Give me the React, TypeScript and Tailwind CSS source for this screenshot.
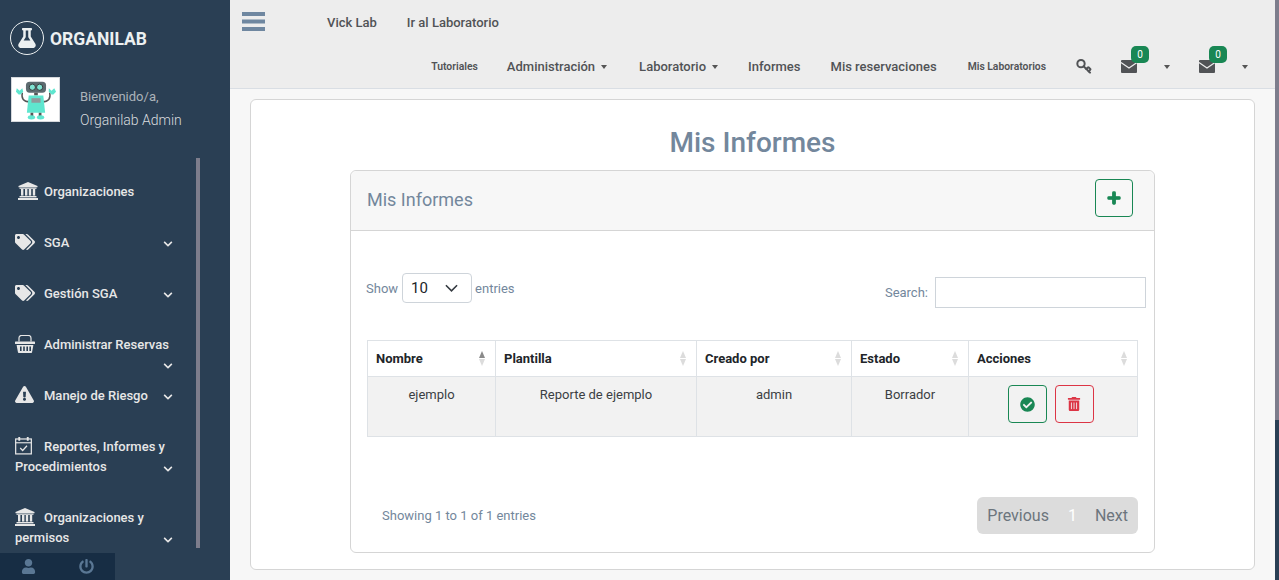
import React from 'react'
import { Key } from 'lucide-react'
import {
  FaCheckCircle,
  FaChevronDown,
  FaExclamationTriangle,
  FaFlask,
  FaPlus,
  FaPowerOff,
  FaTags,
  FaTrashAlt,
  FaUser,
} from 'react-icons/fa'

function Robot() {
  return (
    <svg viewBox="0 0 50 46" className="w-[46px] h-[42px]">
      <path d="M10 15 Q8 25 18 25 M40 15 Q42 25 32 25" stroke="#555" strokeWidth="1.6" fill="none" />
      <path d="M4 10l3 3 3-3 1 4-3 3H6l-3-3z M39 10l3 3 3-3 2 4-3 3h-2l-3-3z" fill="#5fe6cf" />
      <rect x="14" y="3" width="22" height="12" rx="4" fill="#5d6b70" />
      <circle cx="21" cy="9" r="3.4" fill="#7fe3d2" stroke="#333" />
      <circle cx="29" cy="9" r="3.4" fill="#7fe3d2" stroke="#333" />
      <rect x="23" y="15" width="4" height="3" fill="#555" />
      <path d="M17 18h16l2 19H15z" fill="#5fe6cf" />
      <rect x="20" y="21" width="10" height="5" fill="#8f9a9c" />
      <rect x="19" y="37" width="3" height="4" fill="#555" />
      <rect x="28" y="37" width="3" height="4" fill="#555" />
      <ellipse cx="20" cy="42" rx="4" ry="2.4" fill="#5fe6cf" />
      <ellipse cx="30" cy="42" rx="4" ry="2.4" fill="#5fe6cf" />
    </svg>
  )
}

function BankIcon() {
  return (
    <svg viewBox="0 0 20 18" className="w-[20px] h-[18px]" fill="currentColor">
      <path d="M10 0l9.5 4v1.2H.5V4z" />
      <rect x="1.5" y="5.6" width="17" height="1.2" />
      <rect x="3" y="7" width="2.4" height="6.6" />
      <rect x="7" y="7" width="2.4" height="6.6" />
      <rect x="10.8" y="7" width="2.4" height="6.6" />
      <rect x="14.8" y="7" width="2.4" height="6.6" />
      <rect x="1.5" y="14" width="17" height="1.4" />
      <rect x="0" y="16" width="20" height="2" />
    </svg>
  )
}

function BasketIcon() {
  return (
    <svg viewBox="0 0 20 18" className="w-[20px] h-[18px]" fill="currentColor">
      <path d="M4 6.5V3a2.5 2.5 0 0 1 2.5-2.5h7A2.5 2.5 0 0 1 16 3v3.5" fill="none" stroke="currentColor" strokeWidth="1.2" />
      <rect x="0" y="6.5" width="20" height="2.6" rx="0.6" />
      <path fillRule="evenodd" d="M1.6 10h16.8l-1.3 7a1 1 0 0 1-1 1H3.9a1 1 0 0 1-1-1zM5 11.5v4.5h1.6v-4.5zM8.2 11.5v4.5h1.6v-4.5zM11.4 11.5v4.5H13v-4.5zM14.4 11.5v4.5H16v-4.5z" />
    </svg>
  )
}

function CalendarIcon() {
  return (
    <svg viewBox="0 0 18 19" className="w-[17px] h-[19px]" fill="none" stroke="currentColor">
      <rect x="0.7" y="2.6" width="16.6" height="15.8" strokeWidth="1.3" />
      <path d="M0.7 6.6h16.6" strokeWidth="1.2" />
      <path d="M4.5 0.4v4M13.5 0.4v4" strokeWidth="2" />
      <path d="M5.5 12.2l2.6 2.6 4.6-5" strokeWidth="1.3" />
    </svg>
  )
}

function MailIcon() {
  return (
    <svg viewBox="0 0 16 13" className="block w-[16px] h-[13px]">
      <rect width="16" height="13" rx="1" fill="#515356" />
      <path d="M0 2.6l8 5.4 8-5.4" fill="none" stroke="#ededed" strokeWidth="1.2" />
    </svg>
  )
}

function ThinChevron() {
  return (
    <svg viewBox="0 0 14 8" className="w-[13px] h-[8px]" fill="none" stroke="#343a40" strokeWidth="1.7">
      <path d="M1 1l6 6 6-6" />
    </svg>
  )
}

function SortArrows({ active }: { active?: boolean }) {
  return (
    <span className="flex flex-col gap-[1px]">
      <span className={`w-0 h-0 border-x-[3.5px] border-x-transparent border-b-[7px] ${active ? 'border-b-[#8a8a8a]' : 'border-b-[#dcdcdc]'}`} />
      <span className="w-0 h-0 border-x-[3.5px] border-x-transparent border-t-[7px] border-t-[#dcdcdc]" />
    </span>
  )
}

function Caret() {
  return <span className="block w-0 h-0 border-x-[3.5px] border-x-transparent border-t-[4px] border-t-[#555]" />
}

type MenuItem = { icon: React.ReactNode; label: string; second?: string; chevron?: 'inline' | 'below'; height: string }

const menu: MenuItem[] = [
  { icon: <span className="ml-[3px]"><BankIcon /></span>, label: 'Organizaciones', height: 'h-[51px]' },
  { icon: <FaTags className="text-[20px]" />, label: 'SGA', chevron: 'inline', height: 'h-[51px]' },
  { icon: <FaTags className="text-[20px]" />, label: 'Gestión SGA', chevron: 'inline', height: 'h-[51px]' },
  { icon: <BasketIcon />, label: 'Administrar Reservas', chevron: 'below', height: 'h-[51px]' },
  { icon: <FaExclamationTriangle className="text-[19px]" />, label: 'Manejo de Riesgo', chevron: 'inline', height: 'h-[51px]' },
  { icon: <CalendarIcon />, label: 'Reportes, Informes y', second: 'Procedimientos', chevron: 'inline', height: 'h-[71px]' },
  { icon: <BankIcon />, label: 'Organizaciones y', second: 'permisos', chevron: 'inline', height: 'h-[60px]' },
]

function Sidebar() {
  return (
    <aside className="relative w-[230px] shrink-0 h-[580px] bg-[#2a3f54] overflow-hidden">
      <div className="flex items-center h-[75px] pl-[10px]">
        <span className="w-[34px] h-[34px] rounded-full border-[1.5px] border-[#ecf0f1] flex items-center justify-center text-[#ecf0f1] text-[20px]">
          <FaFlask />
        </span>
        <span className="ml-[6px] pt-[3px] text-[#ecf0f1] text-[17.5px] font-bold">ORGANILAB</span>
      </div>
      <div className="flex h-[83px] mt-[2px]">
        <div className="ml-[11px] w-[49px] h-[45px] bg-white border border-[#d5d8dc] flex items-center justify-center">
          <Robot />
        </div>
        <div className="ml-[20px] pt-[12px]">
          <p className="text-[13px] leading-[16px] text-[#acb3ba]">Bienvenido/a,</p>
          <p className="mt-[6px] text-[14px] leading-[18px] font-light text-[#d8dbdf]">Organilab Admin</p>
        </div>
      </div>
      <nav className="pt-[19px] pl-[15px] w-[181px] text-[#e7e7e7] text-[13px] font-medium">
        {menu.map((item) => (
          <div key={item.label} className={`${item.height} relative`}>
            <div className="flex items-center h-[26px] leading-[20px] whitespace-nowrap">
              <span className="w-[29px] flex items-center mb-[3px]">{item.icon}</span>
              <span>{item.label}</span>
            </div>
            {item.second && <div className="leading-[20px] -mt-[3px]">{item.second}</div>}
            {item.chevron && (
              <FaChevronDown
                className={`absolute left-[148px] text-[10px] ${item.chevron === 'below' ? 'top-[29px]' : item.second ? 'top-[30px]' : 'top-[9px]'}`}
              />
            )}
          </div>
        ))}
      </nav>
      {/* sidebar scroll thumb */}
      <div className="absolute left-[196px] top-[158px] w-[4px] h-[390px] bg-[#7d7d8c]" />
      <div className="absolute left-0 bottom-0 w-[115px] h-[27px] bg-[#172d44] flex items-center text-[#5a7794]">
        <span className="w-[57px] flex justify-center text-[15px]"><FaUser /></span>
        <span className="w-[58px] flex justify-center text-[15px]"><FaPowerOff /></span>
      </div>
    </aside>
  )
}

function Topbar() {
  return (
    <header className="h-[89px] bg-[#ededed] border-b border-[#d9dee4] text-[#515356] font-medium">
      <div className="flex items-center h-[46px]">
        <svg viewBox="0 0 23 19" className="ml-[12px] w-[23px] h-[19px] self-start mt-[12px]" fill="#6f87a0">
          <rect width="23" height="4" />
          <rect y="7.5" width="23" height="4" />
          <rect y="15" width="23" height="4" />
        </svg>
        <span className="ml-[62px] text-[13px]">Vick Lab</span>
        <span className="ml-[30px] text-[13px]">Ir al Laboratorio</span>
      </div>
      <nav className="flex items-center justify-end h-[42px] pr-[31px]">
        <span className="text-[10.4px] font-semibold">Tutoriales</span>
        <span className="ml-[29px] text-[13px]">Administración</span>
        <span className="ml-[6px]"><Caret /></span>
        <span className="ml-[32px] text-[13px]">Laboratorio</span>
        <span className="ml-[6px]"><Caret /></span>
        <span className="ml-[30px] text-[13px]">Informes</span>
        <span className="ml-[30px] text-[13px]">Mis reservaciones</span>
        <span className="ml-[31px] text-[10.35px] font-semibold">Mis Laboratorios</span>
        <Key className="ml-[30px] w-[16px] h-[16px] -mt-[2px] -scale-y-100" strokeWidth={3} />
        {[0, 1].map((i) => (
          <React.Fragment key={i}>
            <span className="relative -mt-[2px] ml-[29px]">
              <MailIcon />
              <span className="absolute -top-[14px] left-[10px] w-[18px] h-[17px] rounded-[5px] bg-[#198754] text-white text-[10px] font-normal leading-[17px] text-center">0</span>
            </span>
            <span className="ml-[27px]"><Caret /></span>
          </React.Fragment>
        ))}
      </nav>
    </header>
  )
}

const columns = [
  { label: 'Nombre', width: 'w-[128px]', active: true },
  { label: 'Plantilla', width: 'w-[201px]' },
  { label: 'Creado por', width: 'w-[155px]' },
  { label: 'Estado', width: 'w-[117px]' },
  { label: 'Acciones', width: 'w-[169px]' },
]

function ReportTable() {
  return (
    <table className="w-[770px] mt-[32px] ml-[16px] table-fixed border-collapse text-[13px]">
      <colgroup>
        {columns.map((c) => <col key={c.label} className={c.width} />)}
      </colgroup>
      <thead>
        <tr className="h-[36px]">
          {columns.map((c) => (
            <th key={c.label} className="border border-[#dee2e6] pl-[8px] pr-[10px] text-left font-bold text-[#212529]">
              <span className="flex items-center justify-between">
                {c.label}
                <SortArrows active={c.active} />
              </span>
            </th>
          ))}
        </tr>
      </thead>
      <tbody>
        <tr className="h-[60px] bg-[#f2f2f2] text-[#3b3f44] text-center align-top">
          <td className="border border-[#dee2e6] pt-[8px]">ejemplo</td>
          <td className="border border-[#dee2e6] pt-[8px]">Reporte de ejemplo</td>
          <td className="border border-[#dee2e6] pt-[8px]">admin</td>
          <td className="border border-[#dee2e6] pt-[8px]">Borrador</td>
          <td className="border border-[#dee2e6] pt-[8px] pr-[5px]">
            <span className="flex justify-center gap-[8px]">
              <span className="w-[39px] h-[38px] rounded-[4px] border border-[#198754] flex items-center justify-center text-[#198754] text-[15px]"><FaCheckCircle /></span>
              <span className="w-[39px] h-[38px] rounded-[4px] border border-[#dc3545] flex items-center justify-center text-[#dc3545] text-[14px]"><FaTrashAlt /></span>
            </span>
          </td>
        </tr>
      </tbody>
    </table>
  )
}

export default function App() {
  return (
    <div className="flex w-[1279px] h-[580px] overflow-hidden bg-[#f7f7f7] font-['Roboto',sans-serif]">
      <Sidebar />
      <main className="relative flex-1 min-w-0">
        <Topbar />
        <section className="mt-[10px] ml-[20px] w-[1005px] h-[471px] bg-white border border-[#d5d5d5] rounded-[6px] flex flex-col items-center">
          <h1 className="mt-[25px] text-[28px] leading-[36px] font-medium text-[#73879c]">Mis Informes</h1>
          <div className="mt-[9px] w-[805px] h-[383px] border border-[#d5d5d5] rounded-[6px] text-[#73879c]">
            <div className="flex items-center justify-between h-[60px] bg-[#f7f7f7] border-b border-[#d5d5d5] rounded-t-[6px] pl-[16px] pr-[21px]">
              <span className="text-[18px] -mt-[2px]">Mis Informes</span>
              <span className="w-[38px] h-[38px] -mt-[6px] rounded-[4px] border border-[#198754] flex items-center justify-center text-[#198754] text-[14px]"><FaPlus className="stroke-[40]" /></span>
            </div>
            <div className="flex justify-between pl-[15px] pr-[8px] pt-[42px] text-[13px]">
              <div className="flex items-center h-[30px]">
                <span className="pt-[2px]">Show</span>
                <span className="ml-[4px] w-[70px] h-[30px] bg-white border border-[#ced4da] rounded-[4px] flex items-center justify-between pl-[8px] pr-[13px] text-[#212529] text-[15px]">
                  10
                  <ThinChevron />
                </span>
                <span className="ml-[3px] pt-[2px]">entries</span>
              </div>
              <div className="flex items-center mt-[4px] h-[31px]">
                <span>Search:</span>
                <span className="ml-[7px] w-[211px] h-[31px] border border-[#ced4da] bg-white" />
              </div>
            </div>
            <ReportTable />
            <div className="flex items-center justify-between mt-[60px] ml-[31px] mr-[16px]">
              <span className="text-[13px]">Showing 1 to 1 of 1 entries</span>
              <div className="flex items-center h-[37px] px-[10px] rounded-[6px] bg-[#dcdcdc] text-[#6c757d] text-[16px]">
                <span>Previous</span>
                <span className="ml-[19px] text-white">1</span>
                <span className="ml-[18px]">Next</span>
              </div>
            </div>
          </div>
        </section>
        {/* page scroll edge */}
        <div className="absolute right-0 top-0 w-[4px] h-[420px] bg-[#7d7d8c]" />
        <div className="absolute right-0 top-[420px] w-[4px] h-[160px] bg-[#2a3f54]" />
      </main>
    </div>
  )
}
